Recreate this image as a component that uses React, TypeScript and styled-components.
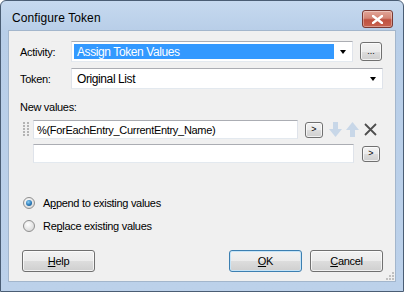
import React from "react";
import styled, { createGlobalStyle, css } from "styled-components";

const GlobalStyle = createGlobalStyle`
  html, body {
    margin: 0;
    padding: 0;
    background: #ffffff;
  }
  body {
    font-family: "Liberation Sans", Arial, sans-serif;
  }
`;

const Window = styled.div`
  box-sizing: border-box;
  width: 404px;
  height: 292px;
  display: flex;
  flex-direction: column;
  border: 1px solid #4a5d74;
  border-radius: 6px 6px 0 0;
  background: linear-gradient(#c6d9ef 0px, #b8cee8 30px, #bcd1ea 100%);
  padding: 0 7px 9px 7px;
`;

const TitleBar = styled.div`
  height: 29px;
  display: flex;
  align-items: flex-start;
  justify-content: space-between;
  padding: 0 3px 0 4px;
`;

const Title = styled.span`
  font-family: "Liberation Sans", Arial, sans-serif;
  font-size: 12px;
  color: #000;
  margin-top: 10px;
  letter-spacing: 0.1px;
`;

const CloseButton = styled.div`
  box-sizing: border-box;
  width: 31px;
  height: 18px;
  margin-top: 9px;
  border: 1px solid #7a3a34;
  border-radius: 3px;
  background: linear-gradient(#e2a598 0%, #d38676 45%, #bf5140 55%, #c86350 100%);
  box-shadow: inset 0 0 0 1px rgba(255, 255, 255, 0.35);
  display: flex;
  align-items: center;
  justify-content: center;
`;

const Client = styled.div`
  flex: 1;
  background: #f0f0f0;
  border: 1px solid #a3b6cc;
  display: flex;
  flex-direction: column;
  padding: 9px 0 0 11px;
  position: relative;
  font-family: "Liberation Sans", Arial, sans-serif;
  font-size: 11px;
  letter-spacing: -0.3px;
  color: #000;
`;

const Row = styled.div<{ $mt?: number; $h?: number }>`
  display: flex;
  align-items: center;
  height: ${(p) => p.$h ?? 21}px;
  margin-top: ${(p) => p.$mt ?? 0}px;
`;

const Label = styled.span<{ $w?: number }>`
  width: ${(p) => (p.$w ? `${p.$w}px` : "auto")};
  flex: none;
`;

const fieldBorder = css`
  box-sizing: border-box;
  background: #fff;
  border: 1px solid #dfe3ea;
  border-top-color: #abadb3;
  border-bottom-color: #e3e9ef;
`;

const Combo = styled.div<{ $w: number }>`
  ${fieldBorder}
  width: ${(p) => p.$w}px;
  height: 21px;
  display: flex;
  align-items: center;
  padding: 2px 0 2px 2px;
  font-size: 12px;
  letter-spacing: -0.4px;
`;

const ComboValue = styled.div<{ $selected?: boolean }>`
  flex: 1;
  height: 100%;
  display: flex;
  align-items: center;
  padding-left: 3px;
  background: ${(p) => (p.$selected ? "#3399ff" : "transparent")};
  color: ${(p) => (p.$selected ? "#fff" : "#000")};
`;

const ComboArrow = styled.div`
  width: 18px;
  flex: none;
  display: flex;
  justify-content: center;
  &::after {
    content: "";
    border-left: 3.5px solid transparent;
    border-right: 3.5px solid transparent;
    border-top: 4px solid #000;
  }
`;

const TextBox = styled.div<{ $w: number; $ml?: number }>`
  ${fieldBorder}
  width: ${(p) => p.$w}px;
  height: 19px;
  margin-left: ${(p) => p.$ml ?? 0}px;
  display: flex;
  align-items: center;
  padding-left: 3px;
  white-space: nowrap;
`;

const buttonFace = css`
  box-sizing: border-box;
  border: 1px solid #707070;
  border-radius: 3px;
  background: linear-gradient(#f2f2f2 0%, #ebebeb 50%, #dddddd 50%, #cfcfcf 100%);
  box-shadow: inset 0 0 0 1px rgba(255, 255, 255, 0.7);
  display: flex;
  align-items: center;
  justify-content: center;
  flex: none;
`;

const SmallButton = styled.div<{ $w: number; $h: number; $ml: number }>`
  ${buttonFace}
  width: ${(p) => p.$w}px;
  height: ${(p) => p.$h}px;
  margin-left: ${(p) => p.$ml}px;
  font-size: 9px;
  letter-spacing: 0;
  padding-bottom: 1px;
`;

const Grip = styled.svg`
  flex: none;
  margin: 0 4px 0 3px;
`;

const IconBox = styled.svg<{ $ml: number }>`
  flex: none;
  margin-left: ${(p) => p.$ml}px;
`;

const RadioRow = styled.label<{ $mt: number }>`
  display: flex;
  align-items: center;
  height: 16px;
  margin-top: ${(p) => p.$mt}px;
  margin-left: 3px;
`;

const RadioCircle = styled.span<{ $checked?: boolean }>`
  box-sizing: border-box;
  width: 12px;
  height: 12px;
  border-radius: 50%;
  border: 1px solid #8f8f8f;
  background: radial-gradient(circle at 40% 35%, #ffffff 0%, #e2e2e2 60%, #cfcfcf 100%);
  display: flex;
  align-items: center;
  justify-content: center;
  margin-right: 8px;
  flex: none;
  &::after {
    content: "";
    display: ${(p) => (p.$checked ? "block" : "none")};
    width: 6px;
    height: 6px;
    border-radius: 50%;
    background: radial-gradient(circle at 40% 35%, #8ed0f5 0%, #2a79b8 55%, #154d7a 100%);
  }
`;

const U = styled.span`
  text-decoration: underline;
`;

const ButtonRow = styled.div`
  display: flex;
  align-items: center;
  margin-top: 16px;
  margin-left: 2px;
`;

const PushButton = styled.div<{ $default?: boolean; $ml?: number }>`
  ${buttonFace}
  width: 73px;
  height: 22px;
  margin-left: ${(p) => p.$ml ?? 0}px;
  ${(p) =>
    p.$default &&
    css`
      border-color: #3c7fb1;
      box-shadow: inset 0 0 0 1px #c6e4f7;
    `}
`;

const SizeGrip = styled.svg`
  position: absolute;
  right: 1px;
  bottom: 1px;
`;

export default function App() {
  return (
    <>
      <GlobalStyle />
      <Window>
        <TitleBar>
          <Title>Configure Token</Title>
          <CloseButton>
            <svg width="11" height="9" viewBox="0 0 11 9">
              <path
                d="M1 1 L10 8 M10 1 L1 8"
                stroke="#ffffff"
                strokeWidth="2.4"
                strokeLinecap="square"
              />
            </svg>
          </CloseButton>
        </TitleBar>
        <Client>
          <Row $mt={1}>
            <Label $w={51}>Activity:</Label>
            <Combo $w={282}>
              <ComboValue $selected>Assign Token Values</ComboValue>
              <ComboArrow />
            </Combo>
            <SmallButton $w={22} $h={19} $ml={7}>
              ...
            </SmallButton>
          </Row>
          <Row $mt={6}>
            <Label $w={51}>Token:</Label>
            <Combo $w={312}>
              <ComboValue>Original List</ComboValue>
              <ComboArrow />
            </Combo>
          </Row>
          <Row $mt={11} $h={14}>
            <Label>New values:</Label>
          </Row>
          <Row $mt={6} $h={19}>
            <Grip width="6" height="15" viewBox="0 0 6 15">
              {[0, 3, 6, 9, 12].map((y) => (
                <React.Fragment key={y}>
                  <rect x="0" y={y} width="2" height="2" fill="#b4b4b4" />
                  <rect x="4" y={y} width="2" height="2" fill="#b4b4b4" />
                </React.Fragment>
              ))}
            </Grip>
            <TextBox $w={265}>%(ForEachEntry_CurrentEntry_Name)</TextBox>
            <SmallButton $w={18} $h={16} $ml={7}>
              &gt;
            </SmallButton>
            <IconBox $ml={6} width="13" height="15" viewBox="0 0 13 15">
              <path d="M4 0 H9 V7 H13 L6.5 15 L0 7 H4 Z" fill="#c8d7e8" />
            </IconBox>
            <IconBox $ml={4} width="13" height="15" viewBox="0 0 13 15">
              <path d="M4 15 H9 V8 H13 L6.5 0 L0 8 H4 Z" fill="#c8d7e8" />
            </IconBox>
            <IconBox $ml={5} width="13" height="13" viewBox="0 0 13 13">
              <path
                d="M1 1 L12 12 M12 1 L1 12"
                stroke="#4e4e4e"
                strokeWidth="1.8"
              />
            </IconBox>
          </Row>
          <Row $mt={5} $h={19}>
            <TextBox $w={321} $ml={13} />
            <SmallButton $w={18} $h={16} $ml={8}>
              &gt;
            </SmallButton>
          </Row>
          <RadioRow $mt={32}>
            <RadioCircle $checked />
            <span>
              A<U>p</U>pend to existing values
            </span>
          </RadioRow>
          <RadioRow $mt={7}>
            <RadioCircle />
            <span>
              Re<U>p</U>lace existing values
            </span>
          </RadioRow>
          <ButtonRow>
            <PushButton>
              <span>
                <U>H</U>elp
              </span>
            </PushButton>
            <PushButton $default $ml={134}>
              <span>
                <U>O</U>K
              </span>
            </PushButton>
            <PushButton $ml={8}>
              <span>
                <U>C</U>ancel
              </span>
            </PushButton>
          </ButtonRow>
          <SizeGrip width="8" height="8" viewBox="0 0 8 8">
            {[
              [6, 0],
              [3, 3],
              [6, 3],
              [0, 6],
              [3, 6],
              [6, 6],
            ].map(([x, y]) => (
              <rect key={`${x}-${y}`} x={x} y={y} width="2" height="2" fill="#c0c0c0" />
            ))}
          </SizeGrip>
        </Client>
      </Window>
    </>
  );
}
